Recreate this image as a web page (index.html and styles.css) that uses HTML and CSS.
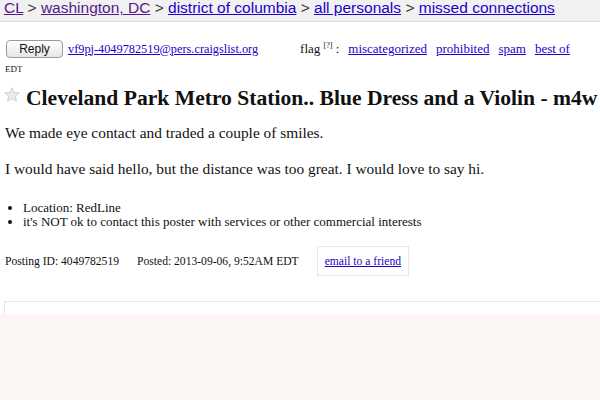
FILE: index.html
```html
<!DOCTYPE html>
<html>
<head>
<meta charset="utf-8">
<link rel="stylesheet" href="styles.css">
</head>
<body>
<div class="crumbs">
  <a class="visited" href="#">CL</a> &gt; <a class="visited" href="#">washington, DC</a> &gt; <a href="#">district of columbia</a> &gt; <a href="#">all personals</a> &gt; <a href="#">missed connections</a>
</div>
<div class="page">
  <div class="replyrow">
    <button class="reply">Reply</button>
    <a class="email" href="#">vf9pj-4049782519@pers.craigslist.org</a>
    <div class="flags">
      <span class="flaglabel">flag <sup>[?]</sup> :</span>
      <a href="#">miscategorized</a>
      <a href="#">prohibited</a>
      <a href="#">spam</a>
      <a href="#">best of</a>
    </div>
  </div>
  <div class="edt">EDT</div>
  <h2 class="title">
    <svg class="star" width="16" height="15" viewBox="0 0 16 15"><polygon points="8,0.8 10.1,5.5 15.2,5.9 11.3,9.3 12.5,14.3 8,11.6 3.5,14.3 4.7,9.3 0.8,5.9 5.9,5.5" fill="#ececec" stroke="#c8c8c8" stroke-width="0.8"/></svg>
    <span>Cleveland Park Metro Station.. Blue Dress and a Violin - m4w</span>
  </h2>
  <p class="body">We made eye contact and traded a couple of smiles.</p>
  <p class="body">I would have said hello, but the distance was too great. I would love to say hi.</p>
  <ul class="notes">
    <li>Location: RedLine</li>
    <li>it's NOT ok to contact this poster with services or other commercial interests</li>
  </ul>
  <div class="postinfo">
    <span>Posting ID: 4049782519</span>
    <span class="posted">Posted: 2013-09-06, 9:52AM EDT</span>
    <div class="friendbox"><a href="#">email to a friend</a></div>
  </div>
  <div class="boxtop"></div>
</div>
<div class="footer"></div>
</body>
</html>
```
FILE: styles.css
```css
html, body {
  margin: 0;
  padding: 0;
  background: #fff;
  font-family: "Liberation Serif", "Times New Roman", serif;
  color: #111;
  overflow: hidden;
  height: 400px;
}
a { color: #2200cc; }
a.visited { color: #551a8b; }

.crumbs {
  height: 22px;
  box-sizing: border-box;
  border-bottom: 1px solid #dcdcdc;
  background: #f1f1f1;
  font-family: "Liberation Sans", Arial, sans-serif;
  font-size: 15.5px;
  line-height: 15px;
  padding-left: 4px;
  color: #333;
  white-space: nowrap;
  overflow: hidden;
}

.page {
  padding-left: 5px;
}

.replyrow {
  display: flex;
  align-items: center;
  margin-top: 18px;
  height: 18px;
  font-size: 13px;
  white-space: nowrap;
}
.reply {
  font-family: "Liberation Sans", Arial, sans-serif;
  font-size: 12px;
  height: 18px;
  width: 57px;
  margin-left: 1px;
  padding: 0;
  background: linear-gradient(#ffffff, #e6e6e6);
  border: 1px solid #9a9a9a;
  border-radius: 4px;
  color: #111;
}
.email {
  margin-left: 5px;
  font-size: 12.3px;
}
.flags {
  margin-left: 42px;
  display: flex;
  gap: 9px;
}
.flaglabel sup {
  font-size: 8px;
}

.edt {
  font-size: 9px;
  margin-top: 6px;
  height: 10px;
}

.title {
  display: flex;
  align-items: center;
  margin: 12px 0 0 -1px;
  font-size: 21.6px;
  font-weight: bold;
  white-space: nowrap;
}
.star {
  margin-right: 6px;
  margin-top: -9px;
}

.body {
  font-size: 15.4px;
  margin: 13px 0 0;
}
.body + .body {
  margin-top: 18px;
}

.notes {
  font-size: 13px;
  margin: 23px 0 0;
  padding-left: 18px;
  line-height: 14px;
}

.postinfo {
  display: flex;
  align-items: center;
  font-size: 11.6px;
  margin-top: 17px;
}
.posted {
  margin-left: 18px;
}
.friendbox {
  margin-left: 18px;
  border: 1px solid #e6e6e6;
  height: 30px;
  box-sizing: border-box;
  padding: 0 7px;
  display: flex;
  align-items: center;
}

.boxtop {
  margin: 25px 0 0 -1px;
  height: 12px;
  border-top: 1px solid #e6e6e6;
  border-left: 1px solid #e6e6e6;
}

.footer {
  background: #fcf7f5;
  height: 100px;
}
```
